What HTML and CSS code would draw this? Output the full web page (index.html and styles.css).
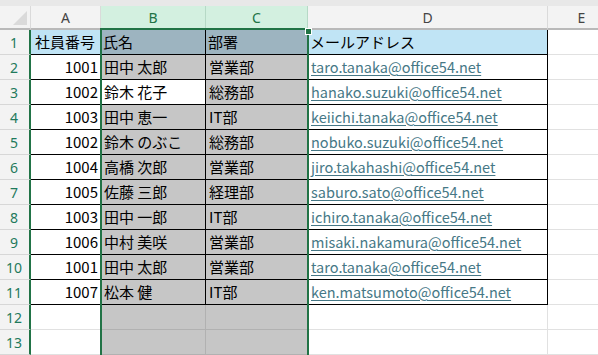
FILE: index.html
```html
<!DOCTYPE html>
<html lang="ja">
<head>
    <meta charset="UTF-8">
    <meta name="viewport" content="width=device-width, initial-scale=1.0">
    <title>社員一覧</title>
    <link rel="stylesheet" href="styles.css">
</head>
<body>
    <div class="sheet">
        <div class="strip"></div>

        <!-- 列見出し -->
        <div class="corner"><span class="corner-mark"></span></div>
        <div class="col-head">A</div>
        <div class="col-head sel">B</div>
        <div class="col-head sel">C</div>
        <div class="col-head">D</div>
        <div class="col-head">E</div>

        <div class="row-head">1</div>
        <div class="cell t hd">社員番号</div>
        <div class="cell t hd s">氏名</div>
        <div class="cell t hd s">部署</div>
        <div class="cell t hd">メールアドレス</div>
        <div class="cell"></div>

        <div class="row-head">2</div>
        <div class="cell t num">1001</div>
        <div class="cell t s">田中 太郎</div>
        <div class="cell t s">営業部</div>
        <div class="cell t"><a class="link">taro.tanaka@office54.net</a></div>
        <div class="cell"></div>

        <div class="row-head">3</div>
        <div class="cell t num">1002</div>
        <div class="cell t active">鈴木 花子</div>
        <div class="cell t s">総務部</div>
        <div class="cell t"><a class="link">hanako.suzuki@office54.net</a></div>
        <div class="cell"></div>

        <div class="row-head">4</div>
        <div class="cell t num">1003</div>
        <div class="cell t s">田中 恵一</div>
        <div class="cell t s">IT部</div>
        <div class="cell t"><a class="link">keiichi.tanaka@office54.net</a></div>
        <div class="cell"></div>

        <div class="row-head">5</div>
        <div class="cell t num">1002</div>
        <div class="cell t s">鈴木 のぶこ</div>
        <div class="cell t s">総務部</div>
        <div class="cell t"><a class="link">nobuko.suzuki@office54.net</a></div>
        <div class="cell"></div>

        <div class="row-head">6</div>
        <div class="cell t num">1004</div>
        <div class="cell t s">高橋 次郎</div>
        <div class="cell t s">営業部</div>
        <div class="cell t"><a class="link">jiro.takahashi@office54.net</a></div>
        <div class="cell"></div>

        <div class="row-head">7</div>
        <div class="cell t num">1005</div>
        <div class="cell t s">佐藤 三郎</div>
        <div class="cell t s">経理部</div>
        <div class="cell t"><a class="link">saburo.sato@office54.net</a></div>
        <div class="cell"></div>

        <div class="row-head">8</div>
        <div class="cell t num">1003</div>
        <div class="cell t s">田中 一郎</div>
        <div class="cell t s">IT部</div>
        <div class="cell t"><a class="link">ichiro.tanaka@office54.net</a></div>
        <div class="cell"></div>

        <div class="row-head">9</div>
        <div class="cell t num">1006</div>
        <div class="cell t s">中村 美咲</div>
        <div class="cell t s">営業部</div>
        <div class="cell t"><a class="link">misaki.nakamura@office54.net</a></div>
        <div class="cell"></div>

        <div class="row-head">10</div>
        <div class="cell t num">1001</div>
        <div class="cell t s">田中 太郎</div>
        <div class="cell t s">営業部</div>
        <div class="cell t"><a class="link">taro.tanaka@office54.net</a></div>
        <div class="cell"></div>

        <div class="row-head">11</div>
        <div class="cell t num">1007</div>
        <div class="cell t s">松本 健</div>
        <div class="cell t s">IT部</div>
        <div class="cell t"><a class="link">ken.matsumoto@office54.net</a></div>
        <div class="cell"></div>

        <div class="row-head">12</div>
        <div class="cell"></div>
        <div class="cell s"></div>
        <div class="cell s"></div>
        <div class="cell"></div>
        <div class="cell"></div>

        <div class="row-head">13</div>
        <div class="cell"></div>
        <div class="cell s"></div>
        <div class="cell s"></div>
        <div class="cell"></div>
        <div class="cell"></div>

        <!-- B:C 列の選択枠 -->
        <div class="selection"><span class="handle"></span></div>
    </div>
</body>
</html>
```

FILE: styles.css
```css
body {
    margin: 0;
    padding: 0;
    overflow: hidden;
    background: #fff;
    font-family: "Noto Sans CJK JP", "Noto Sans", sans-serif;
}

.sheet {
    position: relative;
    display: grid;
    grid-template-columns: 31px 70px 105px 102px 240px 68px;
    grid-template-rows: 6px 24px repeat(13, 25px);
    width: 616px;
    height: 355px;
}

.strip {
    grid-column: 1 / -1;
    background: #e8e8e8;
}

/* 見出し */
.corner {
    box-sizing: border-box;
    display: flex;
    align-items: flex-end;
    justify-content: flex-end;
    padding: 0 3px 3px 0;
    background: #f3f3f3;
    border-right: 1px solid #dadada;
    border-bottom: 2px solid #b9b9b9;
}

.corner-mark {
    width: 0;
    height: 0;
    border-left: 14px solid transparent;
    border-bottom: 14px solid #dadada;
}

.col-head {
    box-sizing: border-box;
    display: flex;
    align-items: center;
    justify-content: center;
    background: #f3f3f3;
    border-right: 1px solid #dadada;
    border-bottom: 2px solid #b9b9b9;
    color: #444;
    font-family: "Noto Sans", sans-serif;
    font-size: 14px;
}

.col-head.sel {
    background: #d3f0e0;
    color: #217346;
    border-bottom-color: #217346;
    border-right-color: #b6d9c6;
}

.row-head {
    box-sizing: border-box;
    display: flex;
    align-items: center;
    justify-content: center;
    padding-right: 1px;
    background: #f3f3f3;
    border-right: 2px solid #217346;
    border-bottom: 1px solid #d7d7d7;
    color: #1f7a5c;
    font-family: "Noto Sans", sans-serif;
    font-size: 14px;
}

/* セル */
.cell {
    box-sizing: border-box;
    padding: 0 3px;
    border-right: 1px solid #e1e1e1;
    border-bottom: 1px solid #e1e1e1;
    font-size: 15px;
    line-height: 24px;
    color: #000;
    white-space: nowrap;
    overflow: hidden;
}

.cell.t {
    border-color: #000;
}

.cell.num {
    text-align: right;
    padding-right: 2px;
}

.cell.hd {
    background: #c0e4f5;
    padding-left: 2px;
}

.cell.s {
    background: #c6c6c6;
    border-color: #b1b1b1;
}

.cell.t.s {
    border-color: #000;
}

.cell.hd.s {
    background: #9db4c0;
}

.cell.active {
    background: #fff;
}

.sheet > .cell:nth-child(6n + 3) {
    padding-left: 4px;
}

.link {
    color: #467886;
    font-size: 14.5px;
    text-decoration: underline;
    text-underline-offset: 2px;
}

.selection {
    position: absolute;
    left: 100px;
    top: 28px;
    bottom: 0;
    width: 209px;
    box-sizing: border-box;
    border: 2px solid #217346;
    border-bottom: none;
    pointer-events: none;
}

.handle {
    position: absolute;
    top: -2px;
    right: -5px;
    width: 5px;
    height: 5px;
    background: #217346;
    border: 1px solid #fff;
}
```
